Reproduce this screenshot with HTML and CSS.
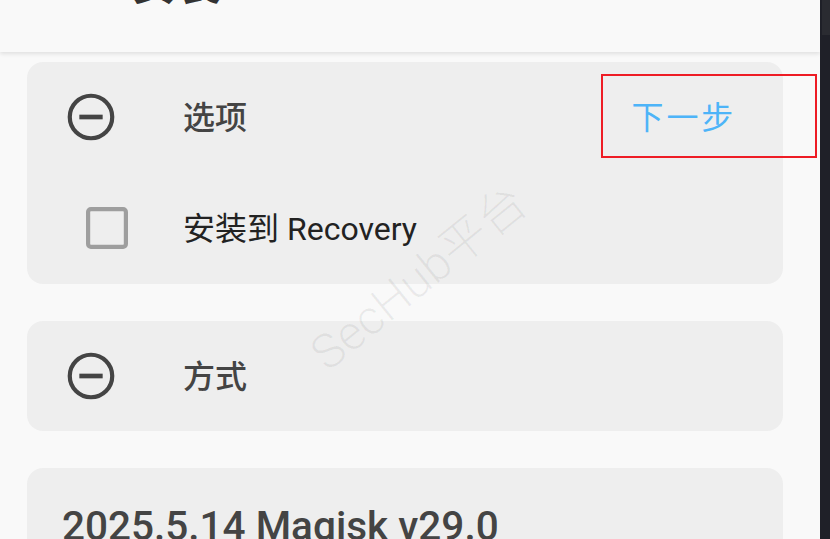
FILE: index.html
```html
<!DOCTYPE html>
<html lang="zh-CN">
<head>
    <meta charset="UTF-8">
    <meta name="viewport" content="width=device-width, initial-scale=1.0">
    <title>安装</title>
    <link rel="stylesheet" href="styles.css">
</head>
<body>
    <div class="screen">
        <div class="app">
            <div class="topbar">
                <h1 class="title">安装</h1>
            </div>

            <div class="content">
                <div class="card">
                    <div class="row">
                        <svg class="row-icon" viewBox="0 0 24 24">
                            <circle cx="12" cy="12" r="9.1" fill="none" stroke="#444" stroke-width="1.8"/>
                            <rect x="7" y="11" width="10" height="2" fill="#444"/>
                        </svg>
                        <span class="row-label">选项</span>
                        <span class="next-btn">下一步</span>
                    </div>
                    <div class="row check-row">
                        <svg class="check-icon" viewBox="0 0 24 24">
                            <rect x="3.9" y="3.9" width="16.2" height="16.2" rx="1.2" fill="none" stroke="#9e9e9e" stroke-width="1.8"/>
                        </svg>
                        <span class="check-label">安装到 Recovery</span>
                    </div>
                </div>

                <div class="card">
                    <div class="row">
                        <svg class="row-icon" viewBox="0 0 24 24">
                            <circle cx="12" cy="12" r="9.1" fill="none" stroke="#444" stroke-width="1.8"/>
                            <rect x="7" y="11" width="10" height="2" fill="#444"/>
                        </svg>
                        <span class="row-label">方式</span>
                    </div>
                </div>

                <div class="card release">
                    <div class="release-title">2025.5.14 Magisk v29.0</div>
                </div>
            </div>
        </div>
        <div class="edge">
            <div class="edge-top"></div>
        </div>
    </div>

    <!-- annotation + watermark drawn over the screenshot -->
    <div class="highlight"></div>
    <div class="watermark">SecHub平台</div>
</body>
</html>
```

FILE: styles.css
```css
body {
    margin: 0;
    width: 830px;
    height: 539px;
    overflow: hidden;
    position: relative;
    background-color: #f9f9f9;
    font-family: Roboto, "Noto Sans CJK SC", sans-serif;
}
.screen {
    display: flex;
    height: 539px;
}
.app {
    width: 820px;
    height: 539px;
    overflow: hidden;
    background-color: #f9f9f9;
}
.edge {
    width: 10px;
    background-color: #1f2028;
}
.edge-top {
    height: 35px;
    margin-left: 2px;
    background-color: #2a2b31;
}
.topbar {
    display: flow-root;
    height: 52px;
    background-color: #f9f9f9;
    box-shadow: 0 2px 4px rgba(0, 0, 0, 0.1);
    position: relative;
    z-index: 1;
}
.title {
    margin: -38px 0 0 131px;
    font-size: 45px;
    line-height: 45px;
    font-weight: 700;
    color: #333;
}
.content {
    padding: 10px 37px 0 27px;
}
.card {
    background-color: #eeeeee;
    border-radius: 16px;
    margin-bottom: 37px;
}
.row {
    display: flex;
    align-items: center;
    box-sizing: border-box;
    height: 110px;
    padding-left: 36px;
}
.row-icon {
    width: 56px;
    height: 56px;
    margin-right: 64px;
    flex-shrink: 0;
}
.row-label {
    font-size: 32px;
    font-weight: 500;
    color: #444;
    margin-bottom: 4px;
}
.next-btn {
    margin-left: auto;
    margin-right: 47px;
    margin-bottom: 4px;
    font-size: 32px;
    letter-spacing: 2.8px;
    color: #4db4f8;
}
.check-row {
    height: 112px;
    padding-left: 52px;
}
.check-icon {
    width: 56px;
    height: 56px;
    margin-right: 48px;
    flex-shrink: 0;
}
.check-label {
    font-size: 32px;
    color: #222;
    margin-bottom: 4px;
}
.release {
    padding: 38px 0 0 35px;
    height: 120px;
}
.release-title {
    font-size: 40.5px;
    line-height: 40px;
    font-weight: 500;
    color: #444;
}
.highlight {
    position: absolute;
    left: 601px;
    top: 74px;
    width: 212px;
    height: 80px;
    border: 2px solid #ee1c25;
}
.watermark {
    position: absolute;
    left: 416px;
    top: 274px;
    transform: translate(-50%, -50%) rotate(-39deg);
    font-size: 48px;
    font-weight: 300;
    color: rgba(0, 0, 0, 0.06);
    white-space: nowrap;
}
```
